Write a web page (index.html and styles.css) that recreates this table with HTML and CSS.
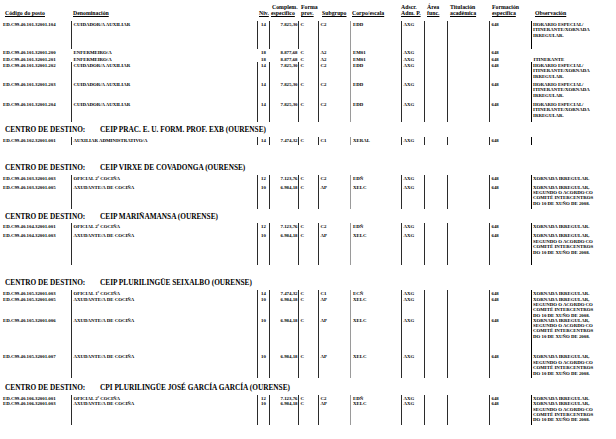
FILE: index.html
```html
<!DOCTYPE html>
<html lang="gl">
<head>
<meta charset="utf-8">
<title>Relación de postos</title>
<link rel="stylesheet" href="styles.css">
</head>
<body>
<div class="page">
  <div class="row head">
    <div class="hc c1"><div class="l1"></div><div class="l2 u">Código do posto</div></div>
    <div class="hc"><div class="l1"></div><div class="l2 u">Denominación</div></div>
    <div class="hc"><div class="l1"></div><div class="l2 u">Niv.</div></div>
    <div class="hc"><div class="l1 pl1">Complem.</div><div class="l2 u">específico</div></div>
    <div class="hc pl3"><div class="l1">Forma</div><div class="l2 u">prov.</div></div>
    <div class="hc pl4"><div class="l1"></div><div class="l2 u">Subgrupo</div></div>
    <div class="hc"><div class="l1"></div><div class="l2 u">Corpo/escala</div></div>
    <div class="hc pl0"><div class="l1">Adscr.</div><div class="l2 u">Adm. P.</div></div>
    <div class="hc pl3"><div class="l1">Área</div><div class="l2 u">func.</div></div>
    <div class="hc pl3"><div class="l1">Titulación</div><div class="l2 u">académica</div></div>
    <div class="hc pl3"><div class="l1">Formación</div><div class="l2 u">específica</div></div>
    <div class="hc pl4"><div class="l1"></div><div class="l2 u">Observación</div></div>
  </div>

  <div class="row h28">
    <div class="c c1">ED.C99.40.101.32001.104</div><div class="c b">CUIDADOR/A AUXILIAR</div><div class="c b ctr">14</div><div class="c b rgt">7.825,30</div><div class="c b">C</div><div class="c b">C2</div><div class="c g">EDD</div><div class="c b">AXG</div><div class="c b"></div><div class="c b"></div><div class="c b">648</div><div class="c o">HORARIO ESPECIAL/<br>ITINERANTE/XORNADA<br>IRREGULAR.</div>
  </div>
  <div class="row h7">
    <div class="c c1">ED.C99.40.101.32001.200</div><div class="c">ENFERMEIRO/A</div><div class="c ctr">18</div><div class="c rgt">8.877,68</div><div class="c">C</div><div class="c b">A2</div><div class="c g">EM01</div><div class="c b">AXG</div><div class="c b"></div><div class="c b"></div><div class="c b">648</div><div class="c"></div>
  </div>
  <div class="row h6">
    <div class="c c1">ED.C99.40.101.32001.201</div><div class="c">ENFERMEIRO/A</div><div class="c ctr">18</div><div class="c rgt">8.877,68</div><div class="c">C</div><div class="c b">A2</div><div class="c g">EM01</div><div class="c b">AXG</div><div class="c b"></div><div class="c b"></div><div class="c b">648</div><div class="c">ITINERANTE</div>
  </div>
  <div class="row h19">
    <div class="c c1">ED.C99.40.101.32001.202</div><div class="c b">CUIDADOR/A AUXILIAR</div><div class="c b ctr">14</div><div class="c b rgt">7.825,30</div><div class="c b">C</div><div class="c b">C2</div><div class="c g">EDD</div><div class="c b">AXG</div><div class="c b"></div><div class="c b"></div><div class="c b">648</div><div class="c o">HORARIO ESPECIAL/<br>ITINERANTE/XORNADA<br>IRREGULAR.</div>
  </div>
  <div class="row h20">
    <div class="c c1">ED.C99.40.101.32001.203</div><div class="c b">CUIDADOR/A AUXILIAR</div><div class="c b ctr">14</div><div class="c b rgt">7.825,30</div><div class="c b">C</div><div class="c b">C2</div><div class="c g">EDD</div><div class="c b">AXG</div><div class="c b"></div><div class="c b"></div><div class="c b">648</div><div class="c o">HORARIO ESPECIAL/<br>ITINERANTE/XORNADA<br>IRREGULAR.</div>
  </div>
  <div class="row h21">
    <div class="c c1">ED.C99.40.101.32001.204</div><div class="c b">CUIDADOR/A AUXILIAR</div><div class="c b ctr">14</div><div class="c b rgt">7.825,30</div><div class="c b">C</div><div class="c b">C2</div><div class="c g">EDD</div><div class="c b">AXG</div><div class="c b"></div><div class="c b"></div><div class="c b">648</div><div class="c o">HORARIO ESPECIAL/<br>ITINERANTE/XORNADA<br>IRREGULAR.</div>
  </div>

  <div class="title"><span class="lbl">CENTRO DE DESTINO:</span>CEIP PRAC. E. U. FORM. PROF. EXB (OURENSE)</div>
  <div class="row h8">
    <div class="c c1">ED.C99.40.102.32001.001</div><div class="c b">AUXILIAR ADMINISTRATIVO/A</div><div class="c b ctr">14</div><div class="c b rgt">7.474,32</div><div class="c b">C</div><div class="c b">C1</div><div class="c g">XERAL</div><div class="c b">AXG</div><div class="c b"></div><div class="c b"></div><div class="c b">648</div><div class="c o"></div>
  </div>

  <div class="title mt15"><span class="lbl">CENTRO DE DESTINO:</span>CEIP VIRXE DE COVADONGA (OURENSE)</div>
  <div class="row h9">
    <div class="c c1">ED.C99.40.103.32001.003</div><div class="c b">OFICIAL 2ª COCIÑA</div><div class="c b ctr">12</div><div class="c b rgt">7.123,76</div><div class="c b">C</div><div class="c b">C2</div><div class="c g">EDÑ</div><div class="c b">AXG</div><div class="c b"></div><div class="c b"></div><div class="c b">648</div><div class="c o">XORNADA IRREGULAR.</div>
  </div>
  <div class="row h25">
    <div class="c c1">ED.C99.40.103.32001.005</div><div class="c b">AXUDANTE/A DE COCIÑA</div><div class="c b ctr">10</div><div class="c b rgt">6.984,18</div><div class="c b">C</div><div class="c b">AP</div><div class="c g">XELC</div><div class="c b">AXG</div><div class="c b"></div><div class="c b"></div><div class="c b">648</div><div class="c o">XORNADA IRREGULAR,<br>SEGUNDO O ACORDO CO<br>COMITÉ INTERCENTROS<br>DO 10 DE XUÑO DE 2008.</div>
  </div>

  <div class="title"><span class="lbl">CENTRO DE DESTINO:</span>CEIP MARIÑAMANSA (OURENSE)</div>
  <div class="row h9">
    <div class="c c1">ED.C99.40.104.32001.001</div><div class="c b">OFICIAL 2ª COCIÑA</div><div class="c b ctr">12</div><div class="c b rgt">7.123,76</div><div class="c b">C</div><div class="c b">C2</div><div class="c g">EDÑ</div><div class="c b">AXG</div><div class="c b"></div><div class="c b"></div><div class="c b">648</div><div class="c o">XORNADA IRREGULAR.</div>
  </div>
  <div class="row h33">
    <div class="c c1">ED.C99.40.104.32001.003</div><div class="c b">AXUDANTE/A DE COCIÑA</div><div class="c b ctr">10</div><div class="c b rgt">6.984,18</div><div class="c b">C</div><div class="c b">AP</div><div class="c g">XELC</div><div class="c b">AXG</div><div class="c b"></div><div class="c b"></div><div class="c b">648</div><div class="c o">XORNADA IRREGULAR,<br>SEGUNDO O ACORDO CO<br>COMITÉ INTERCENTROS<br>DO 10 DE XUÑO DE 2008.</div>
  </div>

  <div class="title mt10"><span class="lbl">CENTRO DE DESTINO:</span>CEIP PLURILINGÜE SEIXALBO (OURENSE)</div>
  <div class="row h6">
    <div class="c c1">ED.C99.40.105.32001.003</div><div class="c b">OFICIAL 1ª COCIÑA</div><div class="c b ctr">14</div><div class="c b rgt">7.474,32</div><div class="c b">C</div><div class="c b">C1</div><div class="c g">ECÑ</div><div class="c b">AXG</div><div class="c b"></div><div class="c b"></div><div class="c b">648</div><div class="c o">XORNADA IRREGULAR.</div>
  </div>
  <div class="row h21b">
    <div class="c c1">ED.C99.40.105.32001.005</div><div class="c b">AXUDANTE/A DE COCIÑA</div><div class="c b ctr">10</div><div class="c b rgt">6.984,18</div><div class="c b">C</div><div class="c b">AP</div><div class="c g">XELC</div><div class="c b">AXG</div><div class="c b"></div><div class="c b"></div><div class="c b">648</div><div class="c o">XORNADA IRREGULAR,<br>SEGUNDO O ACORDO CO<br>COMITÉ INTERCENTROS<br>DO 10 DE XUÑO DE 2008.</div>
  </div>
  <div class="row h37">
    <div class="c c1">ED.C99.40.105.32001.006</div><div class="c b">AXUDANTE/A DE COCIÑA</div><div class="c b ctr">10</div><div class="c b rgt">6.984,18</div><div class="c b">C</div><div class="c b">AP</div><div class="c g">XELC</div><div class="c b">AXG</div><div class="c b"></div><div class="c b"></div><div class="c b">648</div><div class="c o">XORNADA IRREGULAR,<br>SEGUNDO O ACORDO CO<br>COMITÉ INTERCENTROS<br>DO 10 DE XUÑO DE 2008.</div>
  </div>
  <div class="row h24">
    <div class="c c1">ED.C99.40.105.32001.007</div><div class="c b">AXUDANTE/A DE COCIÑA</div><div class="c b ctr">10</div><div class="c b rgt">6.984,18</div><div class="c b">C</div><div class="c b">AP</div><div class="c g">XELC</div><div class="c b">AXG</div><div class="c b"></div><div class="c b"></div><div class="c b">648</div><div class="c o">XORNADA IRREGULAR,<br>SEGUNDO O ACORDO CO<br>COMITÉ INTERCENTROS<br>DO 10 DE XUÑO DE 2008.</div>
  </div>

  <div class="title mt2"><span class="lbl">CENTRO DE DESTINO:</span>CPI PLURILINGÜE JOSÉ GARCÍA GARCÍA (OURENSE)</div>
  <div class="row h5">
    <div class="c c1">ED.C99.40.106.32001.001</div><div class="c b">OFICIAL 2ª COCIÑA</div><div class="c b ctr">12</div><div class="c b rgt">7.123,76</div><div class="c b">C</div><div class="c b">C2</div><div class="c g">EDÑ</div><div class="c b">AXG</div><div class="c b"></div><div class="c b"></div><div class="c b">648</div><div class="c o">XORNADA IRREGULAR.</div>
  </div>
  <div class="row h25">
    <div class="c c1">ED.C99.40.106.32001.003</div><div class="c b">AXUDANTE/A DE COCIÑA</div><div class="c b ctr">10</div><div class="c b rgt">6.984,18</div><div class="c b">C</div><div class="c b">AP</div><div class="c g">XELC</div><div class="c b">AXG</div><div class="c b"></div><div class="c b"></div><div class="c b">648</div><div class="c o">XORNADA IRREGULAR,<br>SEGUNDO O ACORDO CO<br>COMITÉ INTERCENTROS<br>DO 10 DE XUÑO DE 2008.</div>
  </div>
</div>
</body>
</html>
```
FILE: styles.css
```css
html, body {
  margin: 0;
  padding: 0;
  background: #ffffff;
}
.page {
  width: 616px;
  font-family: "Liberation Serif", "Times New Roman", serif;
  color: #000;
}
.row {
  display: grid;
  grid-template-columns: 71px 186px 12px 29px 20px 32px 51px 23px 23px 42px 42px 85px;
  box-sizing: border-box;
}
.head {
  padding: 4px 0 4.7px;
  font-weight: bold;
  font-size: 5.8px;
  line-height: 6px;
}
.hc {
  padding-left: 2px;
  white-space: nowrap;
}
.hc .l1, .hc .l2 {
  height: 6px;
}
.u {
  text-decoration: underline;
  text-decoration-thickness: 0.5px;
  text-underline-offset: 0.5px;
}
.pl0 { padding-left: 0; }
.pl1 { padding-left: 1px; }
.pl3 { padding-left: 3px; }
.pl4 { padding-left: 4px; }
.hc.c1 { padding-left: 5px; }
.c {
  font-size: 4.85px;
  line-height: 5.4px;
  font-weight: bold;
  padding: 1px 0 0 1.5px;
  white-space: nowrap;
  box-sizing: border-box;
  border-left: 1px solid transparent;
}
.c.c1 {
  padding-left: 3px;
  border-left: 0;
}
.b { border-left-color: #2b2b2b; }
.g { border-left: 1.5px solid #9a9a9a; padding-left: 2px; }
.o { border-left: 1.4px solid #000; padding-left: 1px; }
.ctr { text-align: center; padding-left: 0; }
.rgt { text-align: right; padding-right: 0.5px; }
.h5 { height: 5.5px; }
.h6 { height: 6px; }
.h7 { height: 7px; }
.h8 { height: 8.3px; }
.h9 { height: 9px; }
.h19 { height: 19px; }
.h20 { height: 20px; }
.h21 { height: 21.3px; }
.h21b { height: 21px; }
.h24 { height: 24.5px; }
.h25 { height: 25px; }
.h28 { height: 28px; }
.h33 { height: 32.6px; }
.h37 { height: 36.8px; }
.title {
  font-size: 7.3px;
  line-height: 9px;
  font-weight: bold;
  padding: 3.5px 0 2.2px 5px;
  white-space: nowrap;
}
.lbl {
  display: inline-block;
  width: 95px;
}
.mt2 { margin-top: 2px; }
.mt10 { margin-top: 10px; }
.mt15 { margin-top: 15px; }
```
